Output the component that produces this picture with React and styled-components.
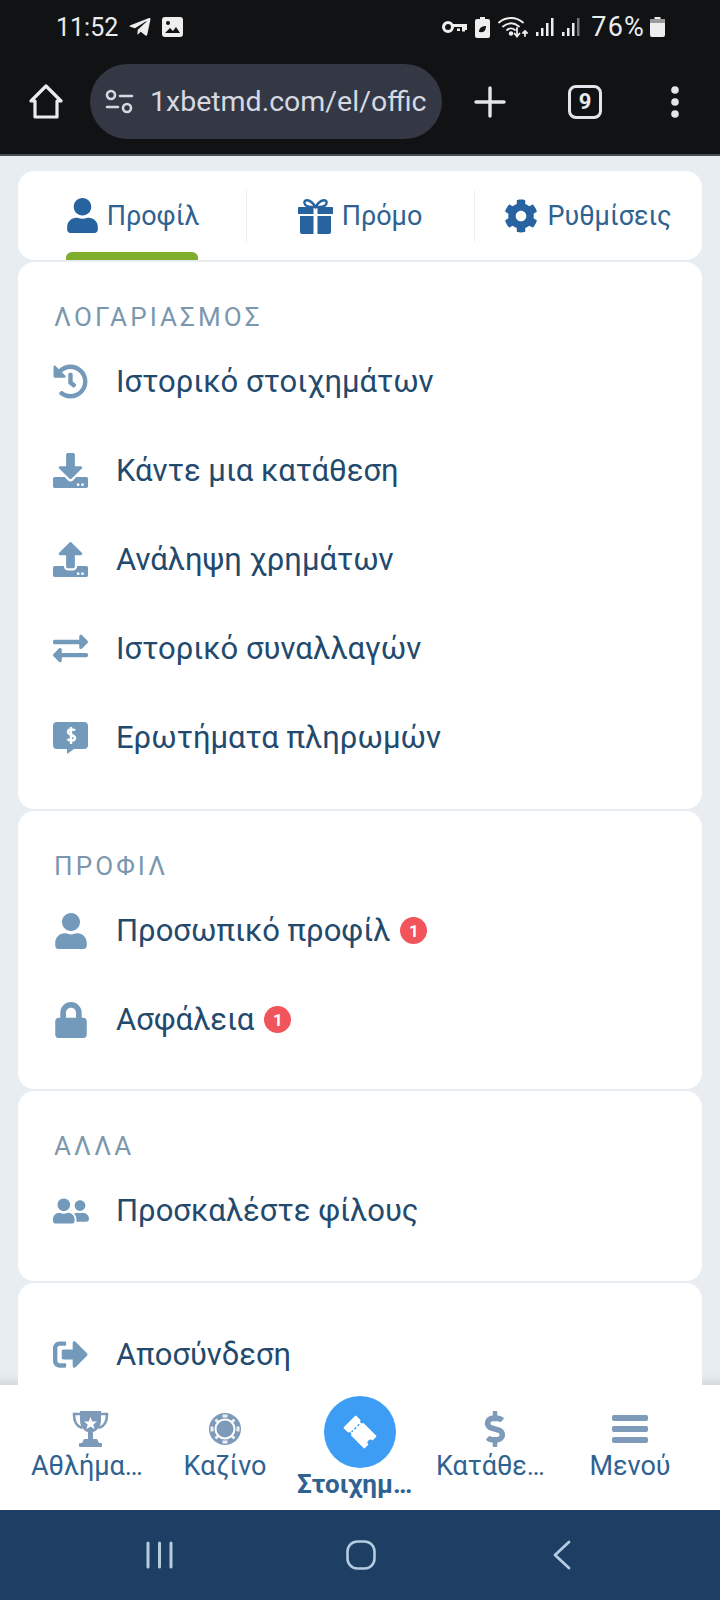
import React from 'react'
import styled, { createGlobalStyle } from 'styled-components'
import {
  FaUser, FaCog, FaHistory, FaDownload, FaUpload, FaExchangeAlt,
  FaLock, FaUserFriends, FaSignOutAlt, FaDollarSign, FaTelegramPlane,
} from 'react-icons/fa'

const GlobalStyle = createGlobalStyle`
  html, body { margin: 0; padding: 0; background: #e8edf1; }
  * { box-sizing: border-box; }
`

const Phone = styled.div`
  width: 720px;
  height: 1600px;
  display: flex;
  flex-direction: column;
  overflow: hidden;
  font-family: Roboto, sans-serif;
`
const Chrome = styled.header`
  height: 156px;
  flex: none;
  background: #111214;
  border-bottom: 2px solid #4b4e53;
  color: #e9ebef;
`
const StatusBar = styled.div`
  height: 54px;
  display: flex;
  align-items: center;
  justify-content: space-between;
  padding: 0 55px 0 56px;
  font-size: 25px;
`
const StatusGroup = styled.div`
  display: flex;
  align-items: center;
  gap: ${(p) => p.$gap || 10}px;
`
const Percent = styled.span`
  font-size: 27px;
  letter-spacing: 1.2px;
  margin: 0 -3px 0 3px;
`
const UrlRow = styled.div`
  display: flex;
  align-items: center;
  height: 75px;
  margin-top: 10px;
  padding-left: 29px;
`
const HomeSlot = styled.div`
  width: 61px;
  display: flex;
`
const UrlPill = styled.div`
  width: 352px;
  height: 75px;
  border-radius: 38px;
  background: #343844;
  display: flex;
  align-items: center;
  padding: 0 15px;
  gap: 16px;
  color: #d6d9e2;
`
const UrlText = styled.div`
  flex: 1;
  overflow: hidden;
  white-space: nowrap;
  font-size: 28.5px;
`
const ToolSlot = styled.div`
  width: ${(p) => p.$width}px;
  display: flex;
  justify-content: center;
  align-items: center;
`
const TabCount = styled.div`
  width: 34px;
  height: 34px;
  border: 3px solid #e3e5ea;
  border-radius: 8px;
  display: flex;
  align-items: center;
  justify-content: center;
  font-weight: 700;
  font-size: 22px;
`
const Content = styled.main`
  flex: 1;
  min-height: 0;
  overflow: hidden;
  padding: 15px 18px 0;
  display: flex;
  flex-direction: column;
  gap: 2px;
  box-shadow: inset 0 -14px 10px -10px rgba(60, 80, 100, 0.14);
`
const TabsCard = styled.nav`
  flex: none;
  height: 89px;
  background: #fff;
  border-radius: 16px;
  display: grid;
  grid-template-columns: 228px 228px 228px;
`
const Tab = styled.div`
  position: relative;
  display: flex;
  align-items: center;
  justify-content: center;
  gap: ${(p) => p.$gap || 9}px;
  color: #2f6290;
  font-size: 27px;
  &::before {
    content: '';
    display: ${(p) => (p.$divider ? 'block' : 'none')};
    position: absolute;
    left: 0;
    top: 19px;
    height: 52px;
    width: 1px;
    background: #edf0f3;
  }
  svg { color: #26639f; }
`
const ActiveBar = styled.span`
  position: absolute;
  left: 48px;
  bottom: 0;
  width: 132px;
  height: 8px;
  border-radius: 6px 6px 0 0;
  background: #7fae2e;
`
const Card = styled.section`
  flex: none;
  background: #fff;
  border-radius: 16px;
  padding: ${(p) => p.$top ?? 40}px 0 ${(p) => p.$bottom ?? 27}px;
`
const Heading = styled.h2`
  margin: 0 0 5px 36px;
  height: 30px;
  line-height: 30px;
  font-weight: 400;
  font-size: 26px;
  letter-spacing: 3.1px;
  color: #7b97ad;
`
const Row = styled.div`
  height: 89px;
  display: flex;
  align-items: center;
  padding-left: 35px;
  color: #234a6d;
  font-size: 31px;
`
const RowIcon = styled.span`
  width: 63px;
  flex: none;
  display: flex;
  color: #7399bb;
`
const Badge = styled.span`
  width: 27px;
  height: 27px;
  border-radius: 50%;
  margin-left: 10px;
  background: #f2545b;
  color: #fff;
  font-size: 17px;
  font-weight: 700;
  display: flex;
  align-items: center;
  justify-content: center;
`
const BottomNav = styled.nav`
  flex: none;
  height: 125px;
  padding: 0 22.5px;
  background: #fff;
  display: grid;
  grid-template-columns: repeat(5, 135px);
`
const NavItem = styled.div`
  display: flex;
  flex-direction: column;
  align-items: center;
  padding-top: ${(p) => (p.$main ? 11 : 25)}px;
  color: #2f6290;
  svg { color: #7d9ab8; }
`
const NavLabel = styled.span`
  max-width: ${(p) => (p.$main ? 126 : 118)}px;
  overflow: hidden;
  white-space: nowrap;
  text-overflow: ellipsis;
  font-size: ${(p) => (p.$main ? 26 : 27)}px;
  line-height: 36px;
  font-weight: ${(p) => (p.$main ? 700 : 400)};
  margin-top: ${(p) => (p.$main ? -2 : 0)}px;
`
const NavIconBox = styled.span`
  height: 38px;
  display: flex;
  align-items: center;
`
const MainCircle = styled.span`
  width: 72px;
  height: 72px;
  border-radius: 50%;
  background: #3d9df5;
  display: flex;
  align-items: center;
  justify-content: center;
  svg { color: #fff; transform: rotate(45deg); }
`
const SystemBar = styled.footer`
  flex: none;
  height: 90px;
  background: #1d3f63;
  display: grid;
  grid-template-columns: 201px 201px 201px;
  padding: 0 58px 0 59px;
  align-items: center;
  justify-items: center;
`

const KeyIcon = () => (
  <svg width="25" height="16" viewBox="0 0 25 16" fill="none" stroke="#eee" strokeWidth="3">
    <circle cx="6" cy="8" r="4.500" />
    <path d="M11 6.500h13v3h-2.500v3M16.500 9.500v2.500" />
  </svg>
)
const LeafBattery = () => (
  <svg width="15" height="21" viewBox="0 0 15 21">
    <path d="M5 0h5v2h3a2 2 0 0 1 2 2v15a2 2 0 0 1-2 2H2a2 2 0 0 1-2-2V4a2 2 0 0 1 2-2h3z" fill="#eee" />
    <path d="M4 15c0-4 3-6 7-6 0 4-2 7-6 6" fill="#111214" />
  </svg>
)
const Wifi = () => (
  <svg width="30" height="22" viewBox="0 0 30 22" fill="none" stroke="#eee" strokeWidth="1.800" strokeLinecap="round">
    <path d="M1 6.500C8 .5 18 .5 25 6.500M5 10.500c5-4 11-4 16 0M9 14c2.500-2 5.500-2 8 0" />
    <circle cx="13" cy="17.500" r="1.300" fill="#eee" />
    <path d="M19 12v8M16.500 17.500l2.500 3 2.500-3M27 20v-5M25 17l2-2 2 2" />
  </svg>
)
const Signal = ({ dim }) => (
  <svg width="18" height="20" viewBox="0 0 18 20">
    <rect x="0" y="15" width="2.500" height="4" fill="#eee" />
    <rect x="5" y="11" width="2.500" height="8" fill="#eee" />
    <rect x="10" y="6" width="2.500" height="13" fill="#eee" />
    <rect x="15" y="1" width="2.500" height="18" fill={dim ? '#777' : '#eee'} />
  </svg>
)
const Battery = () => (
  <svg width="15" height="20" viewBox="0 0 15 20">
    <path d="M4.500 0h6v2h2.500a2 2 0 0 1 2 2v14a2 2 0 0 1-2 2H2a2 2 0 0 1-2-2V4a2 2 0 0 1 2-2h2.500z" fill="#eee" />
    <rect x="0" y="2" width="15" height="4" fill="#9a9a9a" />
  </svg>
)
const PictureIcon = () => (
  <svg width="21" height="20" viewBox="0 0 21 20">
    <rect width="21" height="20" rx="3" fill="#eee" />
    <circle cx="6" cy="6" r="2" fill="#111214" />
    <path d="M3 16l5-5 3 3 3-4 4 6z" fill="#111214" />
  </svg>
)
const HomeIcon = () => (
  <svg width="34" height="36" viewBox="0 0 34 36" fill="none" stroke="#e9ebef" strokeWidth="3.200" strokeLinejoin="round">
    <path d="M2 17L17 2l15 15h-4v16H6V17z" />
  </svg>
)
const TuneIcon = () => (
  <svg width="29" height="26" viewBox="0 0 29 26" fill="none" stroke="#d6d9e2" strokeWidth="2.600" strokeLinecap="round">
    <circle cx="6" cy="6" r="4" />
    <circle cx="22" cy="19" r="4" />
    <path d="M15 7h12M2 18h11" />
  </svg>
)
const PlusIcon = () => (
  <svg width="32" height="32" viewBox="0 0 32 32" stroke="#e3e5ea" strokeWidth="3.400" strokeLinecap="round">
    <path d="M16 2v28M2 16h28" />
  </svg>
)
const DotsIcon = () => (
  <svg width="8" height="32" viewBox="0 0 8 32" fill="#e3e5ea">
    <circle cx="4" cy="4" r="3.800" />
    <circle cx="4" cy="16" r="3.800" />
    <circle cx="4" cy="28" r="3.800" />
  </svg>
)
const GiftIcon = () => (
  <svg width="35" height="36" viewBox="0 0 35 36" fill="currentColor">
    <path d="M17.500 9C12 0 4 1 7 6.500 8 8.500 12 9 17.500 9 23 9 27 8.500 28 6.500 31 1 23 0 17.500 9z" fill="none" stroke="currentColor" strokeWidth="2.400" />
    <path d="M1 9h14.500v7H0v-6a1 1 0 0 1 1-1zM19.500 9H34a1 1 0 0 1 1 1v6H19.500z" />
    <path d="M2 18h13.500v18H4a2 2 0 0 1-2-2zM19.500 18H33v16a2 2 0 0 1-2 2H19.500z" />
  </svg>
)
const ChatDollar = () => (
  <svg width="35" height="32" viewBox="0 0 35 32">
    <path d="M4 0h27a4 4 0 0 1 4 4v19a4 4 0 0 1-4 4H21l-7 5v-5H4a4 4 0 0 1-4-4V4a4 4 0 0 1 4-4z" fill="currentColor" />
    <path d="M22 8.500c-1-1.500-7-2-7 1.500s7 2.500 7 6-6 3-7.500 1M18 5v17" fill="none" stroke="#fff" strokeWidth="2.400" />
  </svg>
)
const Trophy = () => (
  <svg width="37" height="36" viewBox="0 0 37 36">
    <path d="M8 0h21v9c0 7-4 11-8 12v7h4l2 4H10l2-4h4v-7C12 20 8 16 8 9z" fill="currentColor" />
    <rect x="7" y="32" width="23" height="4" rx="1" fill="currentColor" />
    <path d="M9 3H2c0 8 2 12 8 14M28 3h7c0 8-2 12-8 14" fill="none" stroke="currentColor" strokeWidth="2.600" />
    <path d="M18.500 6l1.800 4.500h4.700l-3.700 3 1.400 4.700-4.200-2.800-4.200 2.800 1.400-4.700-3.700-3h4.700z" fill="#fff" />
  </svg>
)
const Chip = () => (
  <svg width="32" height="32" viewBox="0 0 32 32">
    <circle cx="16" cy="16" r="16" fill="currentColor" />
    <circle cx="16" cy="16" r="10.500" fill="#fff" />
    <circle cx="16" cy="16" r="8.500" fill="currentColor" />
    <path d="M13.500 1.500h5v3h-5zM13.500 27.500h5v3h-5zM1.500 13.500h3v5h-3zM27.500 13.500h3v5h-3zM5.500 7.500l2-2 2.500 2.500-2 2zM22 8l2.500-2.500 2 2-2.500 2.500zM5.500 24.500l2.500-2.500 2 2-2.500 2.500zM22 24l2-2 2.500 2.500-2 2z" fill="#fff" opacity="0.85" />
  </svg>
)
const Ticket = () => (
  <svg width="30" height="18" viewBox="0 0 30 18">
    <path d="M1 0h6a2 2 0 0 0 4 0h18a1 1 0 0 1 1 1v5a3 3 0 0 0 0 6v5a1 1 0 0 1-1 1H11a2 2 0 0 0-4 0H1a1 1 0 0 1-1-1V1a1 1 0 0 1 1-1z" fill="currentColor" />
    <path d="M9 4v11" stroke="#3d9df5" strokeWidth="1.400" strokeDasharray="2.500 2" />
  </svg>
)
const MenuLines = () => (
  <svg width="36" height="28" viewBox="0 0 36 28" fill="currentColor">
    <rect width="36" height="6" rx="2" />
    <rect y="11" width="36" height="6" rx="2" />
    <rect y="22" width="36" height="6" rx="2" />
  </svg>
)
const RecentsIcon = () => (
  <svg width="27" height="28" viewBox="0 0 27 28" stroke="#b4cbe2" strokeWidth="3" strokeLinecap="round">
    <path d="M2 2v24M13.500 2v24M25 2v24" />
  </svg>
)
const HomeKey = () => (
  <svg width="30" height="30" viewBox="0 0 30 30" fill="none" stroke="#b4cbe2" strokeWidth="2.600">
    <rect x="1.500" y="1.500" width="27" height="27" rx="10" />
  </svg>
)
const BackKey = () => (
  <svg width="18" height="30" viewBox="0 0 18 30" fill="none" stroke="#b4cbe2" strokeWidth="2.800" strokeLinecap="round" strokeLinejoin="round">
    <path d="M16 2L2 15l14 13" />
  </svg>
)

const groups = [
  {
    title: 'ΛΟΓΑΡΙΑΣΜΟΣ',
    bottom: 27,
    rows: [
      { icon: <FaHistory size={35} />, text: 'Ιστορικό στοιχημάτων' },
      { icon: <FaDownload size={35} />, text: 'Κάντε μια κατάθεση' },
      { icon: <FaUpload size={35} />, text: 'Ανάληψη χρημάτων' },
      { icon: <FaExchangeAlt size={35} />, text: 'Ιστορικό συναλλαγών' },
      { icon: <ChatDollar />, text: 'Ερωτήματα πληρωμών' },
    ],
  },
  {
    title: 'ΠΡΟΦΙΛ',
    bottom: 25,
    rows: [
      { icon: <FaUser size={36} />, text: 'Προσωπικό προφίλ', badge: 1 },
      { icon: <FaLock size={36} />, text: 'Ασφάλεια', badge: 1 },
    ],
  },
  {
    title: 'ΑΛΛΑ',
    bottom: 26,
    rows: [{ icon: <FaUserFriends size={36} />, text: 'Προσκαλέστε φίλους' }],
  },
]

function App() {
  return (
    <Phone>
      <GlobalStyle />
      <Chrome>
        <StatusBar>
          <StatusGroup>
            <span>11:52</span>
            <FaTelegramPlane size={24} color="#eee" />
            <PictureIcon />
          </StatusGroup>
          <StatusGroup $gap={8}>
            <KeyIcon />
            <LeafBattery />
            <Wifi />
            <Signal />
            <Signal dim />
            <Percent>76%</Percent>
            <Battery />
          </StatusGroup>
        </StatusBar>
        <UrlRow>
          <HomeSlot><HomeIcon /></HomeSlot>
          <UrlPill>
            <TuneIcon />
            <UrlText>1xbetmd.com/el/offic</UrlText>
          </UrlPill>
          <ToolSlot $width={96}><PlusIcon /></ToolSlot>
          <ToolSlot $width={94}><TabCount>9</TabCount></ToolSlot>
          <ToolSlot $width={86}><DotsIcon /></ToolSlot>
        </UrlRow>
      </Chrome>
      <Content>
        <TabsCard>
          <Tab $gap={7}>
            <FaUser size={35} />
            Προφίλ
            <ActiveBar />
          </Tab>
          <Tab $divider><GiftIcon />Πρόμο</Tab>
          <Tab $divider><FaCog size={34} />Ρυθμίσεις</Tab>
        </TabsCard>
        {groups.map((group) => (
          <Card key={group.title} $bottom={group.bottom}>
            <Heading>{group.title}</Heading>
            {group.rows.map((row) => (
              <Row key={row.text}>
                <RowIcon>{row.icon}</RowIcon>
                {row.text}
                {row.badge && <Badge>{row.badge}</Badge>}
              </Row>
            ))}
          </Card>
        ))}
        <Card $top={27}>
          <Row>
            <RowIcon><FaSignOutAlt size={35} /></RowIcon>
            Αποσύνδεση
          </Row>
        </Card>
      </Content>
      <BottomNav>
        <NavItem>
          <NavIconBox><Trophy /></NavIconBox>
          <NavLabel>Αθλήματα</NavLabel>
        </NavItem>
        <NavItem>
          <NavIconBox><Chip /></NavIconBox>
          <NavLabel>Καζίνο</NavLabel>
        </NavItem>
        <NavItem $main>
          <MainCircle><Ticket /></MainCircle>
          <NavLabel $main>Στοιχημάτων</NavLabel>
        </NavItem>
        <NavItem>
          <NavIconBox><FaDollarSign size={36} /></NavIconBox>
          <NavLabel>Κατάθεση</NavLabel>
        </NavItem>
        <NavItem>
          <NavIconBox><MenuLines /></NavIconBox>
          <NavLabel>Μενού</NavLabel>
        </NavItem>
      </BottomNav>
      <SystemBar>
        <RecentsIcon />
        <HomeKey />
        <BackKey />
      </SystemBar>
    </Phone>
  )
}

export default App
